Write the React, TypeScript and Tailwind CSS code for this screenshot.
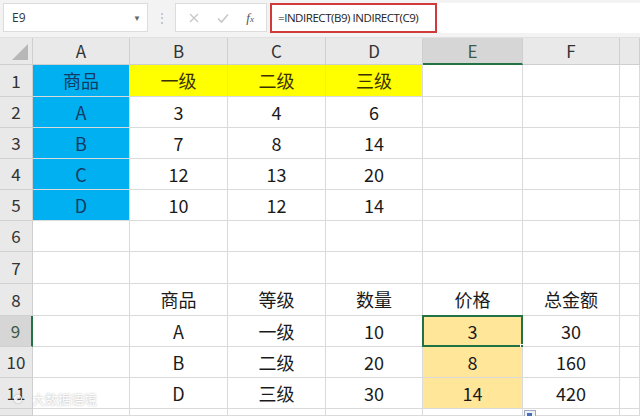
// Excel-style sheet: INDIRECT lookup demo
const COLS = [97, 98, 98, 97, 100, 97, 20];
const ROW_H = [32, 31, 31, 31, 31, 31, 32, 32, 31, 31, 31, 7];
const LETTERS = ['A', 'B', 'C', 'D', 'E', 'F', ''];

type Cell = { t?: string; bg?: string; color?: string; sel?: boolean };

const blue = 'bg-[#00b0f0]';
const yellow = 'bg-[#ffff00]';
const gold = 'bg-[#ffe699]';

const data: Record<string, Cell> = {
  A1: { t: '商品', bg: blue, color: 'text-[#143a63]' },
  A2: { t: 'A', bg: blue, color: 'text-[#143a63]' },
  A3: { t: 'B', bg: blue, color: 'text-[#143a63]' },
  A4: { t: 'C', bg: blue, color: 'text-[#143a63]' },
  A5: { t: 'D', bg: blue, color: 'text-[#143a63]' },
  B1: { t: '一级', bg: yellow, color: 'text-[#3a3000]' },
  C1: { t: '二级', bg: yellow, color: 'text-[#3a3000]' },
  D1: { t: '三级', bg: yellow, color: 'text-[#3a3000]' },
  B2: { t: '3' }, C2: { t: '4' }, D2: { t: '6' },
  B3: { t: '7' }, C3: { t: '8' }, D3: { t: '14' },
  B4: { t: '12' }, C4: { t: '13' }, D4: { t: '20' },
  B5: { t: '10' }, C5: { t: '12' }, D5: { t: '14' },
  B8: { t: '商品' }, C8: { t: '等级' }, D8: { t: '数量' }, E8: { t: '价格' }, F8: { t: '总金额' },
  B9: { t: 'A' }, C9: { t: '一级' }, D9: { t: '10' }, E9: { t: '3', bg: gold, sel: true }, F9: { t: '30' },
  B10: { t: 'B' }, C10: { t: '二级' }, D10: { t: '20' }, E10: { t: '8', bg: gold }, F10: { t: '160' },
  B11: { t: 'D' }, C11: { t: '三级' }, D11: { t: '30' }, E11: { t: '14', bg: gold }, F11: { t: '420' },
};

const font = "font-['Noto_Sans_CJK_SC','Noto_Sans',sans-serif]";

function Toolbar() {
  return (
    <div className="h-[38px] bg-[#f3f3f3] flex items-start pt-[3px] pl-[3px] gap-0 border-b border-[#e0e0e0]">
      <div className="w-[145px] h-[29px] bg-white border border-[#dcdcdc] flex items-center justify-between pl-[8px] pr-[6px]">
        <span className="text-[12px] text-[#333] font-['Open_Sans',sans-serif]">E9</span>
        <span className="text-[8px] text-[#666]">▼</span>
      </div>
      <div className="w-[27px] h-[29px] flex items-center justify-center text-[#b5b5b5] text-[12px]">⋮</div>
      <div className="w-[92px] h-[29px] bg-white border border-[#dcdcdc] flex items-center justify-around px-[4px]">
        <svg width="12" height="12" viewBox="0 0 12 12"><path d="M2 2l8 8M10 2l-8 8" stroke="#c8c8c8" strokeWidth="1.4" /></svg>
        <svg width="14" height="12" viewBox="0 0 14 12"><path d="M2 6.5l3.5 3.5L12 2.5" stroke="#c8c8c8" strokeWidth="1.6" fill="none" /></svg>
        <span className="text-[13px] italic text-[#555] font-['Liberation_Serif',serif]">f<span className="text-[9px]">x</span></span>
      </div>
      <div className="w-[3px]" />
      <div className="flex-1 h-[30px] bg-white flex items-stretch">
        <div className="w-[167px] border-2 border-[#d03a3a] flex items-center pl-[6px]">
          <span className="text-[11.5px] text-[#222] font-['Open_Sans',sans-serif] whitespace-nowrap tracking-[-0.45px]">=INDIRECT(B9) INDIRECT(C9)</span>
        </div>
      </div>
    </div>
  );
}

function Sheet() {
  const cols = '33px ' + COLS.map((c) => `${c}px`).join(' ');
  return (
    <div className="grid" style={{ gridTemplateColumns: cols }}>
      {/* header row */}
      <div className="h-[27px] bg-[#e9e9e9] border-r border-b border-[#cfcfcf] relative">
        <div className="absolute right-[4px] bottom-[4px] w-0 h-0 border-l-[16px] border-l-transparent border-b-[16px] border-b-[#b7b7b7]" />
      </div>
      {LETTERS.map((l, i) => (
        <div
          key={l + i}
          className={`h-[27px] flex items-center justify-center text-[17px] border-r border-[#d0d0d0] ${l === 'E' ? 'bg-[#d6d6d6] border-b-2 border-b-[#217346] text-[#3c5a46]' : 'bg-[#e9e9e9] border-b border-b-[#cfcfcf] text-[#333]'} ${font}`}
        >
          {l}
        </div>
      ))}
      {ROW_H.map((h, r) => {
        const row = r + 1;
        return [
          <div
            key={'h' + row}
            style={{ height: h }}
            className={`flex items-center justify-center text-[17px] border-b border-[#d0d0d0] ${font} ${row === 9 ? 'bg-[#d6d6d6] border-r-2 border-r-[#217346] text-[#3c5a46]' : 'bg-[#e9e9e9] border-r border-r-[#cfcfcf] text-[#333]'}`}
          >
            {row <= 11 ? row : ''}
          </div>,
          ...LETTERS.map((l, c) => {
            const cell = data[`${l}${row}`] || {};
            return (
              <div
                key={`${c}-${row}`}
                style={{ height: h }}
                className={`relative flex items-center justify-center text-[18px] border-r border-b border-[#dadada] ${cell.bg ?? 'bg-white'} ${cell.color ?? 'text-[#1a1a1a]'} ${font}`}
              >
                {cell.t}
                {cell.sel && (
                  <>
                    <div className="absolute -left-[1px] -top-[1px] -right-[1px] -bottom-[1px] border-2 border-[#217346]" />
                    <div className="absolute -right-[3px] -bottom-[3px] w-[5px] h-[5px] bg-[#217346] border border-white" />
                  </>
                )}
              </div>
            );
          }),
        ];
      })}
    </div>
  );
}

export default function App() {
  return (
    <div className="w-[640px] h-[416px] overflow-hidden bg-white relative">
      <Toolbar />
      <Sheet />
      {/* paste options button */}
      <div className="absolute left-[524px] top-[410px] w-[12px] h-[10px] bg-[#eef2f8] border border-[#9aa9c6]">
        <div className="ml-[2px] mt-[2px] w-[5px] h-[5px] bg-[#4a6fb5]" />
      </div>
      {/* watermark */}
      <div className="absolute left-[14px] top-[389px] flex items-center gap-[10px] text-white text-[13px] font-['Noto_Sans_CJK_SC',sans-serif] [text-shadow:0_0_2px_rgba(0,0,0,0.35)]">
        <span className="w-[8px] h-[8px] rounded-full border border-white shadow-[0_0_2px_rgba(0,0,0,0.35)]" />
        <span>大数据语境</span>
      </div>
    </div>
  );
}
